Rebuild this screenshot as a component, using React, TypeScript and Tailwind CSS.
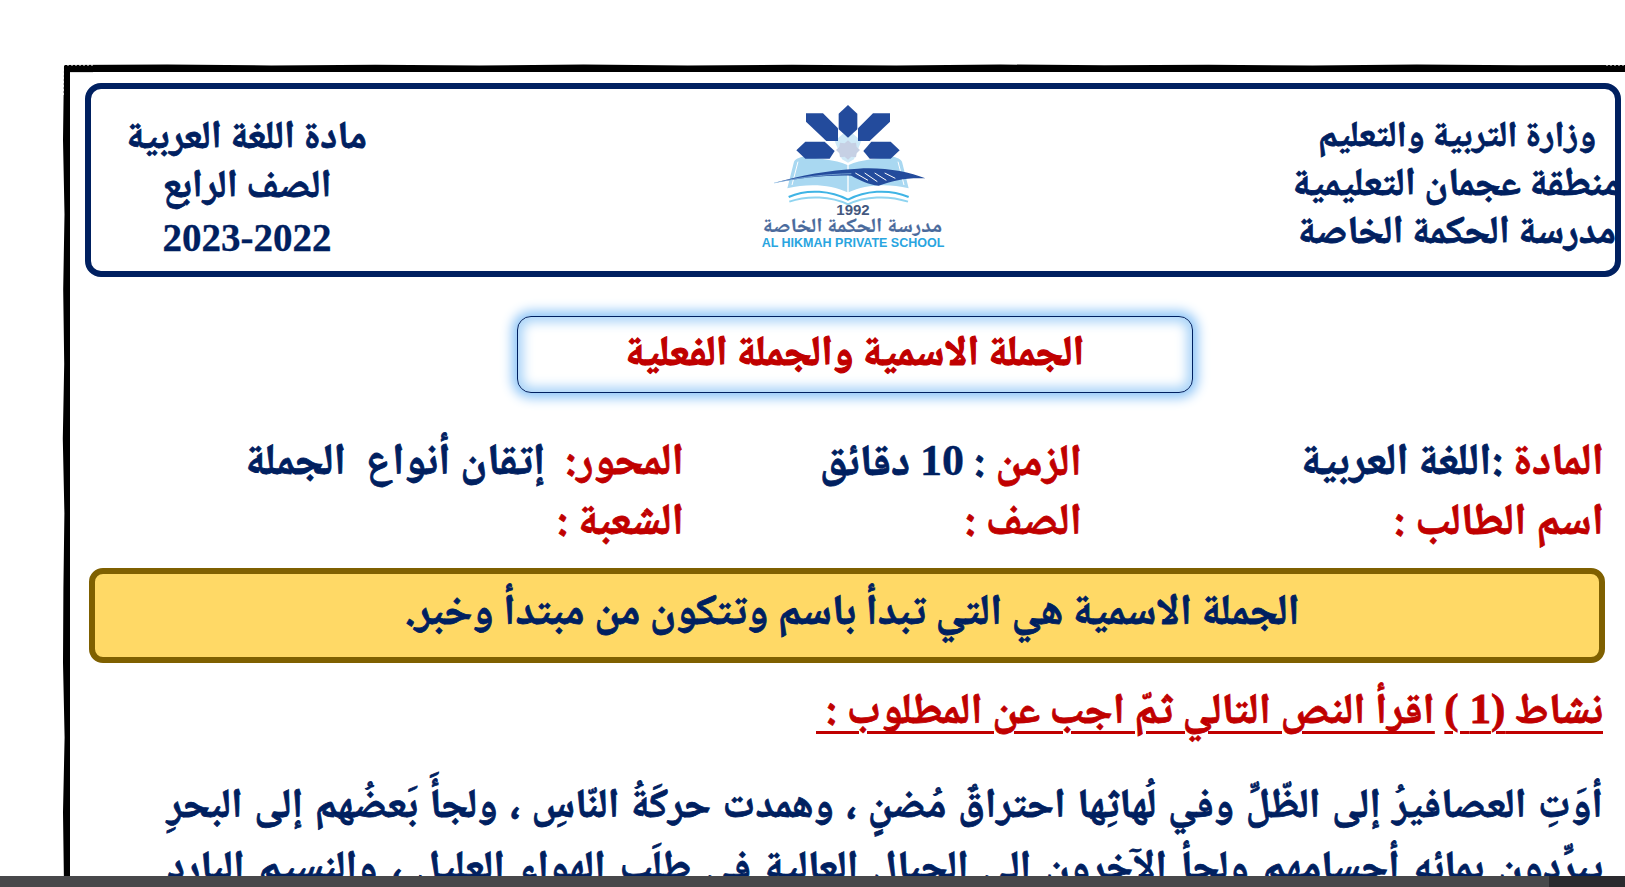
const NAVY = "text-[#002060]";
const LATIN = "[font-family:'Liberation_Serif',serif]";

// wobbly outer edge of the hand-drawn page frame
const topWave = [65, 64.5, 65.5, 64.8, 65.6, 64.6, 65.4, 64.7, 65.6, 64.5, 65.3, 64.8, 65.5, 64.6, 65.2, 64.9];
const leftWave = [64, 63, 64.5, 63.2, 64.2, 62.8, 64.4, 63.4, 63, 64.6, 63, 64];

function FrameEdge() {
  const top = topWave.map((y, i) => `${63 + (i * 1562) / (topWave.length - 1)},${y}`).join(" ");
  const left = leftWave.map((x, i) => `${x},${65 + (i * 822) / (leftWave.length - 1)}`).join(" ");
  return (
    <svg className="absolute left-0 top-0 w-[1625px] h-[887px] pointer-events-none" viewBox="0 0 1625 887">
      <polygon points={`${top} 1625,72 70,72 70,887 ${left.split(" ").reverse().join(" ")}`} fill="#000" />
      <line x1="70" y1="72.5" x2="93" y2="72.5" stroke="#ddd" />
      <line x1="63" y1="65" x2="93" y2="65" stroke="#fff" strokeWidth="1" strokeDasharray="2 2" />
      <line x1="63" y1="65" x2="63" y2="95" stroke="#fff" strokeWidth="1.5" strokeDasharray="2 2" />
      <line x1="1606" y1="65" x2="1625" y2="65" stroke="#fff" strokeWidth="1" strokeDasharray="2 2" />
    </svg>
  );
}

function SchoolLogo() {
  return (
    <svg className="w-[170px] h-[103px]" viewBox="150 36 510 309">
      {/* book pages */}
      <path d="M262 196 C240 200 232 205 228 212 L208 292 C270 276 340 280 388 304 L388 222 C350 205 300 205 262 196 Z" fill="#a9d8f1" />
      <path d="M518 196 C540 200 548 205 552 212 L572 292 C510 276 440 280 392 304 L392 222 C430 205 480 205 518 196 Z" fill="#a9d8f1" />
      <path d="M240 212 L222 282 M540 212 L558 282" stroke="#fff" strokeWidth="3" fill="none" />
      <path d="M340 150 L390 215 L440 150 L390 130 Z" fill="#fff" />
      <path d="M350 150 L372 205 L390 215 L408 205 L430 150 L405 128 L375 128 Z" fill="#cfe9f7" />
      {/* star petals */}
      <polygon points="362,68 390,42 418,68 418,115 390,140 362,115" fill="#234b9c" />
      <polygon points="264,67 315,67 360,112 360,150 325,150 264,92" fill="#234b9c" />
      <polygon points="516,67 465,67 420,112 420,150 455,150 516,92" fill="#234b9c" />
      <polygon points="235,178 262,152 320,152 350,180 335,203 262,203" fill="#234b9c" />
      <polygon points="545,178 518,152 460,152 436,180 455,203 518,203" fill="#234b9c" />
      {/* centre rosette */}
      <polygon points="390,148 400,157 414,155 416,168 426,177 416,187 414,199 400,197 390,206 380,197 366,199 364,187 354,177 364,168 366,155 380,157" fill="#c6d0e4" />
      {/* quill */}
      <path d="M168 276 C250 252 330 238 420 233 C500 228 570 242 622 262 C560 260 530 268 482 284 C450 280 425 268 400 254 C320 252 240 262 168 276 Z" fill="#234b9c" />
      <path d="M168 276 C250 258 320 250 400 248" stroke="#9cc9ea" strokeWidth="2" fill="none" />
      <path d="M412 246 L450 268 M440 246 L478 272 M470 246 L505 268 M500 246 L532 262" stroke="#fff" strokeWidth="3" />
      {/* waves under the book */}
      <path d="M212 318 C270 292 340 300 390 326 C440 300 510 292 572 318" stroke="#3fb4e5" strokeWidth="6" fill="none" />
      <path d="M214 332 C270 312 340 316 390 340 C440 316 510 312 570 332" stroke="#8fd4f0" strokeWidth="6" fill="none" />
    </svg>
  );
}

export default function App() {
  return (
    <div dir="rtl" className="relative w-full h-[887px] overflow-hidden bg-white pt-[72px] pl-[70px] font-bold [font-family:'Noto_Naskh_Arabic','Liberation_Serif',serif] [-webkit-text-stroke:0.8px]">
      <FrameEdge />
      <div className="relative pr-[4px] pl-[15px]">
        <header className={`mt-[11px] h-[194px] border-[6px] border-[#002060] rounded-[16px] flex items-start ${NAVY}`}>
          <div className="w-[330px] shrink-0 -mr-[7px] mt-[26px] text-center text-[39px] leading-[48px] whitespace-nowrap">
            <p className="text-[36px]">وزارة التربية والتعليم</p>
            <p>منطقة عجمان التعليمية</p>
            <p>مدرسة الحكمة الخاصة</p>
          </div>
          <div className="w-[240px] shrink-0 mr-[319px] mt-[14px] flex flex-col items-center">
            <SchoolLogo />
            <p className="-mt-[3px] text-[15px] leading-[13px] text-[#44587f] font-bold [font-family:'Liberation_Sans',sans-serif] [-webkit-text-stroke:0px]">1992</p>
            <p className="mt-[6px] text-[20px] leading-[13px] scale-x-[1.1] text-[#4a6a9c] whitespace-nowrap [-webkit-text-stroke:0.2px]">مدرسة الحكمة الخاصة</p>
            <p dir="ltr" className="mt-[2px] text-[12.5px] leading-[13px] text-[#29a5e0] font-bold whitespace-nowrap [font-family:'Liberation_Sans',sans-serif] [-webkit-text-stroke:0px]">AL HIKMAH PRIVATE SCHOOL</p>
          </div>
          <div className="w-[240px] shrink-0 mr-[366px] mt-[26px] text-center text-[39px] leading-[49px] whitespace-nowrap">
            <p>مادة اللغة العربية</p>
            <p>الصف الرابع</p>
            <p className={`text-[39px] [-webkit-text-stroke:0.3px] ${LATIN}`}>2023-2022</p>
          </div>
        </header>

        <div className="mt-[39px] mr-[428px] w-[676px] h-[77px] pt-[2px] border border-[#002060] rounded-[14px] bg-white shadow-[0_0_12px_5px_#8ec5f7,inset_0_0_12px_5px_#a8d3f8] flex items-center justify-center">
          <h1 className="text-[42px] leading-none text-[#c00000] whitespace-nowrap [-webkit-text-stroke:1.2px]">الجملة الاسمية والجملة الفعلية</h1>
        </div>

        <div className="mt-[44px] pr-[17px] grid grid-cols-[522px_398px_1fr] gap-y-[4px] text-[44px] leading-[55px] whitespace-nowrap text-[#c00000]">
          <p>المادة <span className={NAVY}>:اللغة العربية</span></p>
          <p className="-mt-[4px]">الزمن <span className={NAVY}>: <span className={`[-webkit-text-stroke:0.4px] ${LATIN}`}>10</span> دقائق</span></p>
          <p>المحور:&nbsp;&nbsp;<span className={NAVY}>إتقان أنواع&nbsp;&nbsp;الجملة</span></p>
          <p>اسم الطالب :</p>
          <p>الصف :</p>
          <p>الشعبة :</p>
        </div>

        <div className="mt-[16px] ml-[4px] mr-[16px] h-[95px] pl-[10px] border-[6px] border-[#7f6000] rounded-[14px] bg-[#ffd966] flex items-center justify-center">
          <p className={`text-[43px] whitespace-nowrap ${NAVY}`}>الجملة الاسمية هي التي تبدأ باسم وتتكون من مبتدأ وخبر.</p>
        </div>

        <h2 className="mt-[21px] pr-[18px] text-[43px] leading-[50px] text-[#c00000] whitespace-nowrap">
          <span className="underline decoration-[3px] underline-offset-[8px]">نشاط <span className={LATIN}>(1 )</span></span>{" "}
          <span className="underline decoration-[3px] underline-offset-[8px]">اقرأ النص التالي ثمّ اجب عن المطلوب :&nbsp;</span>
        </h2>

        <div className={`mt-[38px] mr-[18px] ml-[82px] text-[41px] leading-[62px] ${NAVY} [text-align-last:justify]`}>
          <p className="whitespace-nowrap">أوَتِ العصافيرُ إلى الظّلِّ وفي لُهاثِها احتراقٌ مُضنٍ ، وهمدت حركَةُ النّاسِ ، ولجأَ بَعضُهم إلى البحرِ</p>
          <p className="whitespace-nowrap">يبرِّدون بمائِهِ أجسامهم ولجأ الآخرون إلى الجبالِ العالية في طلَبِ الهواءِ العليل ، والنسيم البارد</p>
        </div>
      </div>

      {/* viewer toolbar strip cut off at the bottom */}
      <div dir="ltr" className="absolute left-0 right-0 bottom-0 h-[11px] flex">
        <div className="flex-1 bg-[#48484a]" />
        <div className="w-[76px] bg-[#2b2a2e]" />
      </div>
    </div>
  );
}
